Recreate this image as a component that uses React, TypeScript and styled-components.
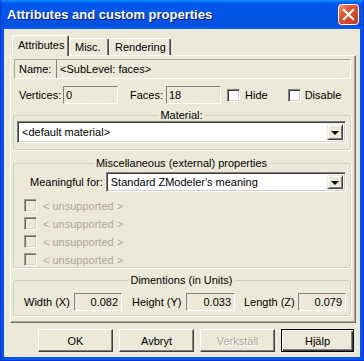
import React from "react";
import styled, { createGlobalStyle } from "styled-components";

const GlobalStyle = createGlobalStyle`
  html, body {
    margin: 0;
    padding: 0;
    background: #ece9d8;
  }
  body {
    font-family: "Liberation Sans", Arial, sans-serif;
    font-size: 11px;
    color: #000;
  }
`;

const Window = styled.div`
  width: 364px;
  height: 361px;
  box-sizing: border-box;
  display: flex;
  flex-direction: column;
  background: #0055ea;
  border-left: 1px solid #0831d9;
  border-right: 1px solid #0831d9;
  border-bottom: 1px solid #0831d9;
`;

const TitleBar = styled.div`
  height: 29px;
  flex: none;
  display: flex;
  align-items: center;
  justify-content: space-between;
  padding: 0 4px 0 6px;
  background: linear-gradient(#0997ff 0, #0058ee 3px, #0054e3 18px, #0050e0 26px, #0061ff 29px);
`;

const Title = styled.span`
  font-family: "Liberation Sans", Arial, sans-serif;
  font-weight: bold;
  font-size: 13px;
  color: #fff;
  text-shadow: 1px 1px #0a1883;
`;

const Client = styled.div`
  flex: 1;
  margin: 0 3px 3px 3px;
  background: #ece9d8;
  padding: 6px 4px 0 6px;
  display: flex;
  flex-direction: column;
`;

const TabStrip = styled.div`
  height: 20px;
  display: flex;
  align-items: flex-end;
  padding-left: 2px;
  position: relative;
  z-index: 1;
`;

const Tab = styled.div<{ $active?: boolean; $w: number }>`
  box-sizing: border-box;
  width: ${(p) => p.$w}px;
  height: ${(p) => (p.$active ? 21 : 17)}px;
  margin-bottom: ${(p) => (p.$active ? -1 : 0)}px;
  background: #ece9d8;
  border-top: 1px solid #fff;
  border-left: 1px solid #fff;
  border-right: 1px solid #404040;
  border-radius: 2px 2px 0 0;
  box-shadow: inset -1px 0 #808080;
  display: flex;
  align-items: ${(p) => (p.$active ? "flex-start" : "center")};
  padding: ${(p) => (p.$active ? "3px 0 0 5px" : "0 0 0 5px")};
`;

const Panel = styled.div`
  box-sizing: border-box;
  height: 268px;
  border-top: 1px solid #fff;
  border-left: 1px solid #fff;
  border-right: 1px solid #716f64;
  border-bottom: 1px solid #716f64;
  box-shadow: inset -1px -1px #aca899;
  padding: 3px 4px 3px 2px;
  display: flex;
  flex-direction: column;
`;

const NameFrame = styled.div`
  box-sizing: border-box;
  margin-left: 1px;
  height: 20px;
  display: flex;
  align-items: stretch;
  border: 1px solid;
  border-color: #aca899 #fff #fff #aca899;
`;

const NameLabel = styled.span`
  width: 41px;
  padding-left: 4px;
  box-sizing: border-box;
  display: flex;
  align-items: center;
`;

const NameValue = styled.span`
  flex: 1;
  margin: 0 1px 0 0;
  border-left: 1px solid #808080;
  padding-left: 3px;
  display: flex;
  align-items: center;
`;

const InfoRow = styled.div`
  height: 18px;
  margin-top: 7px;
  padding-left: 6px;
  display: flex;
  align-items: center;
`;

const Label = styled.span<{ $w?: number; $ml?: number }>`
  width: ${(p) => (p.$w ? `${p.$w}px` : "auto")};
  margin-left: ${(p) => p.$ml ?? 0}px;
  white-space: nowrap;
  flex: none;
`;

const ReadField = styled.div<{ $w: number; $right?: boolean }>`
  box-sizing: border-box;
  width: ${(p) => p.$w}px;
  height: 18px;
  flex: none;
  border: 1px solid;
  border-color: #808080 #fff #fff #808080;
  background: #ece9d8;
  padding: 0 3px 0 2px;
  line-height: 16px;
  text-align: ${(p) => (p.$right ? "right" : "left")};
`;

const Check = styled.span<{ $disabled?: boolean; $ml?: number }>`
  box-sizing: border-box;
  width: 13px;
  height: 13px;
  flex: none;
  margin-left: ${(p) => p.$ml ?? 0}px;
  border: 1px solid;
  border-color: #808080 #fff #fff #808080;
  box-shadow: inset 1px 1px #404040, inset -1px -1px #d4d0c8;
  background: ${(p) => (p.$disabled ? "#ece9d8" : "#fff")};
  opacity: ${(p) => (p.$disabled ? 0.75 : 1)};
`;

const CheckText = styled.span<{ $disabled?: boolean; $gap: number }>`
  margin-left: ${(p) => p.$gap}px;
  color: ${(p) => (p.$disabled ? "#aca899" : "#000")};
  white-space: nowrap;
`;

const Group = styled.fieldset<{ $mt: number; $pb: number }>`
  margin: ${(p) => p.$mt}px 0 0 0;
  min-width: 0;
  padding: 0 4px ${(p) => p.$pb}px 3px;
  border: 1px solid #d0d0bf;
  border-radius: 3px;
  box-shadow: 1px 1px #fff;
`;

const Legend = styled.legend`
  margin: 0 auto;
  padding: 0 2px;
  line-height: 11px;
  height: 11px;
`;

const ComboLine = styled.div`
  display: flex;
`;

const Combo = styled.div<{ $h: number }>`
  box-sizing: border-box;
  height: ${(p) => p.$h}px;
  flex: 1;
  display: flex;
  align-items: center;
  background: #fff;
  border: 1px solid;
  border-color: #808080 #fff #fff #808080;
  box-shadow: inset 1px 1px #404040, inset -1px -1px #d4d0c8;
  padding: 2px 2px 2px 4px;
`;

const ComboText = styled.span`
  flex: 1;
  white-space: nowrap;
`;

const DropButton = styled.span`
  box-sizing: border-box;
  width: 16px;
  height: 100%;
  flex: none;
  background: #ece9d8;
  border: 1px solid;
  border-color: #ece9d8 #404040 #404040 #ece9d8;
  box-shadow: inset 1px 1px #fff, inset -1px -1px #808080;
  display: flex;
  align-items: center;
  justify-content: center;
`;

const Arrow = styled.span`
  width: 0;
  height: 0;
  border-left: 4px solid transparent;
  border-right: 4px solid transparent;
  border-top: 4px solid #000;
  margin-top: 1px;
`;

const MeaningRow = styled.div`
  margin-top: 3px;
  padding-left: 13px;
  display: flex;
  align-items: center;
  gap: 3px;
`;

const OptionList = styled.div`
  margin-top: 7px;
  padding-left: 7px;
  display: flex;
  flex-direction: column;
  gap: 5px;
`;

const OptionRow = styled.div`
  height: 13px;
  display: flex;
  align-items: center;
`;

const DimRow = styled.div`
  margin-top: 7px;
  padding-left: 7px;
  display: flex;
  align-items: center;
`;

const ButtonRow = styled.div`
  margin-top: 6px;
  padding-right: 2px;
  display: flex;
  justify-content: flex-end;
  gap: 6px;
`;

const Button = styled.div<{ $disabled?: boolean; $default?: boolean }>`
  box-sizing: border-box;
  width: ${(p) => (p.$default ? 73 : 75)}px;
  height: 23px;
  display: flex;
  align-items: center;
  justify-content: center;
  background: #ece9d8;
  border: 1px solid;
  border-color: ${(p) => (p.$default ? "#000" : "#fff #404040 #404040 #fff")};
  box-shadow: ${(p) =>
    p.$default
      ? "inset 1px 1px #fff, inset -1px -1px #404040, inset -2px -2px #808080"
      : "inset -1px -1px #808080"};
  color: ${(p) => (p.$disabled ? "#aca899" : "#000")};
  text-shadow: ${(p) => (p.$disabled ? "1px 1px #fff" : "none")};
`;

const CloseIcon = () => (
  <svg width="21" height="21" viewBox="0 0 21 21">
    <defs>
      <linearGradient id="cg" x1="0" y1="0" x2="1" y2="1">
        <stop offset="0" stopColor="#f0a38a" />
        <stop offset="0.35" stopColor="#e2552e" />
        <stop offset="1" stopColor="#c3391a" />
      </linearGradient>
    </defs>
    <rect x="0.5" y="0.5" width="20" height="20" rx="3" fill="url(#cg)" stroke="#fff" />
    <path d="M6 6 L15 15 M15 6 L6 15" stroke="#fff" strokeWidth="2.2" strokeLinecap="square" />
  </svg>
);

const unsupported = [0, 1, 2, 3];

export default function App() {
  return (
    <>
      <GlobalStyle />
      <Window>
        <TitleBar>
          <Title>Attributes and custom properties</Title>
          <CloseIcon />
        </TitleBar>
        <Client>
          <TabStrip>
            <Tab $active $w={57}>Attributes</Tab>
            <Tab $w={40}>Misc.</Tab>
            <Tab $w={62}>Rendering</Tab>
          </TabStrip>
          <Panel>
            <NameFrame>
              <NameLabel>Name:</NameLabel>
              <NameValue>&lt;SubLevel: faces&gt;</NameValue>
            </NameFrame>

            <InfoRow>
              <Label $w={44}>Vertices:</Label>
              <ReadField $w={55}>0</ReadField>
              <Label $w={36} $ml={12}>Faces:</Label>
              <ReadField $w={55}>18</ReadField>
              <Check $ml={6} />
              <CheckText $gap={5}>Hide</CheckText>
              <Check $ml={20} />
              <CheckText $gap={4}>Disable</CheckText>
            </InfoRow>

            <Group $mt={6} $pb={6}>
              <Legend>Material:</Legend>
              <ComboLine>
                <Combo $h={22}>
                  <ComboText>&lt;default material&gt;</ComboText>
                  <DropButton><Arrow /></DropButton>
                </Combo>
              </ComboLine>
            </Group>

            <Group $mt={8} $pb={1}>
              <Legend>Miscellaneous (external) properties</Legend>
              <MeaningRow>
                <Label>Meaningful for:</Label>
                <Combo $h={20}>
                  <ComboText>Standard ZModeler's meaning</ComboText>
                  <DropButton><Arrow /></DropButton>
                </Combo>
              </MeaningRow>
              <OptionList>
                {unsupported.map((i) => (
                  <OptionRow key={i}>
                    <Check $disabled />
                    <CheckText $disabled $gap={6}>&lt; unsupported &gt;</CheckText>
                  </OptionRow>
                ))}
              </OptionList>
            </Group>

            <Group $mt={7} $pb={4}>
              <Legend>Dimentions (in Units)</Legend>
              <DimRow>
                <Label $w={50}>Width (X)</Label>
                <ReadField $w={48} $right>0.082</ReadField>
                <Label $w={54} $ml={10}>Height (Y)</Label>
                <ReadField $w={49} $right>0.033</ReadField>
                <Label $w={54} $ml={9}>Length (Z)</Label>
                <ReadField $w={48} $right>0.079</ReadField>
              </DimRow>
            </Group>
          </Panel>
          <ButtonRow>
            <Button>OK</Button>
            <Button>Avbryt</Button>
            <Button $disabled>Verkställ</Button>
            <Button $default>Hjälp</Button>
          </ButtonRow>
        </Client>
      </Window>
    </>
  );
}
